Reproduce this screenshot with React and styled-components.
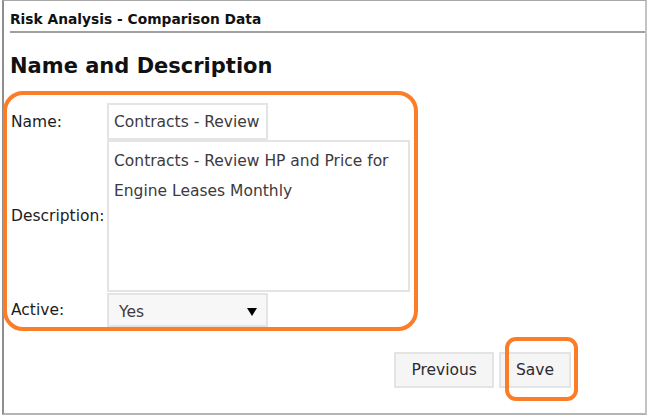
import React from "react";
import styled, { createGlobalStyle } from "styled-components";

const Global = createGlobalStyle`
  html, body { margin: 0; padding: 0; background: #fff; }
  body { font-family: "DejaVu Sans", Verdana, sans-serif; color: #1c1c1c; }
  * { box-sizing: border-box; }
`;

const Frame = styled.div`
  margin-left: 2px;
  width: 645px;
  height: 415px;
  border-left: 2px solid #8f8f8f;
  border-top: 1px solid #a8a8a8;
  border-right: 2px solid #c4c4c4;
  border-bottom: 2px solid #b4b4b4;
  display: flex;
  flex-direction: column;
`;

const Header = styled.div`
  margin-left: 6px;
  padding-top: 7px;
  line-height: 23px;
  font-size: 13.8px;
  font-weight: bold;
  color: #111;
  border-bottom: 2px solid #a0a0a0;
`;

const Title = styled.h1`
  margin: 18px 0 10px 6px;
  font-size: 21px;
  line-height: 30px;
  font-weight: bold;
  color: #111;
`;

const Highlight = styled.div`
  border: 4px solid #fb7d27;
  border-radius: ${(p) => p.$radius}px;
`;

const FormBox = styled(Highlight)`
  margin-left: -1px;
  width: 415px;
  padding: 8px 0 0 4px;
  display: grid;
  grid-template-columns: 96px auto;
  align-items: center;
  overflow: hidden;
`;

const Label = styled.label`
  font-size: 15.5px;
  color: #1c1c1c;
`;

const fieldBase = `
  font-family: "DejaVu Sans", Verdana, sans-serif;
  font-size: 15.5px;
  color: #3d3a40;
  border: 2px solid #e4e4e4;
  background: #fff;
  outline: none;
  margin: 0;
`;

const TextInput = styled.input`
  ${fieldBase}
  width: 161px;
  height: 37px;
  padding: 0 5px;
`;

const TextArea = styled.textarea`
  ${fieldBase}
  width: 303px;
  height: 152px;
  padding: 4px 5px;
  line-height: 30px;
  resize: none;
  overflow: hidden;
`;

const Select = styled.div`
  ${fieldBase}
  margin-top: 1px;
  width: 161px;
  height: 34px;
  padding: 3px 10px 0 10px;
  background: #f7f7f7;
  display: flex;
  align-items: center;
  justify-content: space-between;
`;

const Caret = styled.span`
  width: 0;
  height: 0;
  border-left: 5px solid transparent;
  border-right: 5px solid transparent;
  border-top: 8px solid #000;
  margin-right: -1px;
`;

const Actions = styled.div`
  margin-top: 21px;
  margin-right: 74px;
  display: flex;
  justify-content: flex-end;
  gap: 5px;
`;

const Button = styled.button`
  position: relative;
  height: 36px;
  padding: 0 15px;
  font-family: "DejaVu Sans", Verdana, sans-serif;
  font-size: 15.5px;
  color: #2c2a33;
  background: #f5f5f5;
  border: 2px solid #e4e4e4;
  cursor: pointer;
`;

const SaveMark = styled(Highlight)`
  position: absolute;
  left: 4px;
  top: -17px;
  width: 73px;
  height: 64px;
  pointer-events: none;
`;

export default function App() {
  return (
    <>
      <Global />
      <Frame>
        <Header>Risk Analysis - Comparison Data</Header>
        <Title>Name and Description</Title>
        <FormBox $radius={20}>
          <Label>Name:</Label>
          <TextInput readOnly defaultValue="Contracts - Review" />
          <Label>Description:</Label>
          <TextArea
            readOnly
            defaultValue="Contracts - Review HP and Price for Engine Leases Monthly"
          />
          <Label>Active:</Label>
          <Select>
            <span>Yes</span>
            <Caret />
          </Select>
        </FormBox>
        <Actions>
          <Button>Previous</Button>
          <Button>
            Save
            <SaveMark $radius={11} />
          </Button>
        </Actions>
      </Frame>
    </>
  );
}
